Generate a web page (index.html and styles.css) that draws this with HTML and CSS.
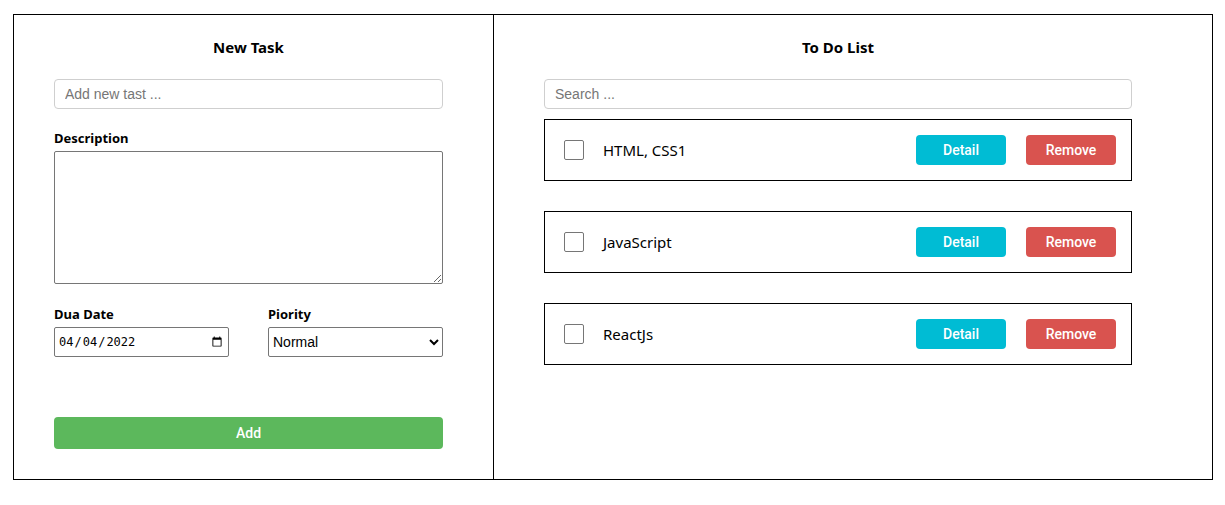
FILE: index.html
```html
<!DOCTYPE html>
<html>
<head>
<meta charset="utf-8">
<link rel="stylesheet" href="styles.css">
</head>
<body>
<div class="app">
  <section class="panel panel-new">
    <div class="content content-new">
      <h2 class="title">New Task</h2>
      <input class="text-input" type="text" placeholder="Add new tast ...">
      <label class="label label-desc">Description</label>
      <textarea class="textarea"></textarea>
      <div class="row">
        <div class="field">
          <label class="label">Dua Date</label>
          <input class="date" type="date" value="2022-04-04">
        </div>
        <div class="field">
          <label class="label">Piority</label>
          <select class="select">
            <option>Low</option>
            <option selected>Normal</option>
            <option>High</option>
          </select>
        </div>
      </div>
      <button class="btn btn-add">Add</button>
    </div>
  </section>
  <section class="panel panel-list">
    <div class="content content-list">
      <h2 class="title">To Do List</h2>
      <input class="text-input" type="text" placeholder="Search ...">
      <div class="items">
        <div class="item">
          <span class="check"></span>
          <span class="item-name">HTML, CSS1</span>
          <button class="btn btn-detail">Detail</button>
          <button class="btn btn-remove">Remove</button>
        </div>
        <div class="item">
          <span class="check"></span>
          <span class="item-name">JavaScript</span>
          <button class="btn btn-detail">Detail</button>
          <button class="btn btn-remove">Remove</button>
        </div>
        <div class="item">
          <span class="check"></span>
          <span class="item-name">ReactJs</span>
          <button class="btn btn-detail">Detail</button>
          <button class="btn btn-remove">Remove</button>
        </div>
      </div>
    </div>
  </section>
</div>
</body>
</html>
```

FILE: styles.css
```css
* { box-sizing: border-box; }
html, body { margin: 0; padding: 0; background: #fff; }
body { font-family: "Noto Sans", "Open Sans", sans-serif; color: #000; }

.app {
  margin: 14px 0 0 13px;
  width: 1200px;
  height: 466px;
  border: 1px solid #000;
  display: grid;
  grid-template-columns: 480px 718px;
}

.panel-new { border-right: 1px solid #000; padding: 22px 0 0 40px; }
.panel-list { padding: 22px 0 0 50px; }

.content { display: flex; flex-direction: column; }
.content-new { width: 389px; }
.content-list { width: 588px; }

.title {
  margin: 0 0 22px;
  font-size: 15px;
  line-height: 20px;
  font-weight: 700;
  text-align: center;
}

.text-input {
  height: 30px;
  width: 100%;
  border: 1px solid #cfcfcf;
  border-radius: 4px;
  padding: 0 10px;
  font-family: "Liberation Sans", Arial, sans-serif;
  font-size: 14px;
  outline: none;
}
.text-input::placeholder { color: #767676; }

.label {
  display: block;
  font-size: 13px;
  line-height: 18px;
  font-weight: 700;
  margin-bottom: 4px;
}
.label-desc { margin-top: 20px; }

.textarea {
  height: 133px;
  width: 100%;
  border: 1px solid #767676;
  border-radius: 2px;
  resize: vertical;
  margin: 0;
}

.row {
  display: flex;
  gap: 39px;
  margin-top: 21px;
}
.field { width: 175px; }

.date, .select {
  width: 175px;
  height: 30px;
  border: 1px solid #767676;
  border-radius: 2px;
  margin: 0;
  background: #fff;
  color: #000;
}
.date { font-family: "DejaVu Sans Mono", monospace; font-size: 12px; padding: 0 3px; }
.select { font-family: "Liberation Sans", Arial, sans-serif; font-size: 14px; padding: 0; }

.btn {
  border: none;
  border-radius: 4px;
  color: #fff;
  font-family: Roboto, "Liberation Sans", sans-serif;
  font-size: 14px;
  font-weight: 500;
  cursor: pointer;
}
.btn-add {
  margin-top: 60px;
  height: 32px;
  width: 100%;
  background: #5cb85c;
}

.items {
  margin-top: 10px;
  display: flex;
  flex-direction: column;
  gap: 30px;
}
.item {
  height: 62px;
  border: 1px solid #000;
  display: flex;
  align-items: center;
  padding: 0 15px 0 19px;
}
.check {
  width: 20px;
  height: 20px;
  border: 1px solid #767676;
  border-radius: 2px;
  flex: none;
}
.item-name {
  margin-left: 19px;
  flex: 1;
  font-size: 15px;
}
.btn-detail, .btn-remove { width: 90px; height: 30px; }
.btn-detail { background: #00bcd4; }
.btn-remove { background: #d9534f; margin-left: 20px; }
```
